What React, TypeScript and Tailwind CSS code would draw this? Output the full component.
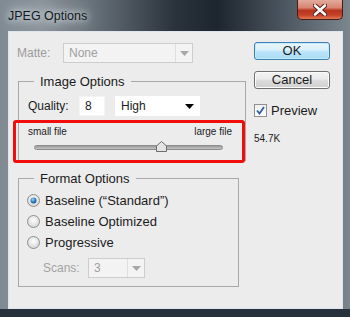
import React from "react";

function Arrow({ color = "#000" }: { color?: string }) {
  return (
    <svg width="9" height="5" viewBox="0 0 9 5">
      <path d="M0 0 H9 L4.5 5 Z" fill={color} />
    </svg>
  );
}

function Radio({ checked }: { checked?: boolean }) {
  return (
    <svg width="13" height="13" viewBox="0 0 13 13">
      <defs>
        <radialGradient id={checked ? "rg1" : "rg0"} cx="50%" cy="40%" r="60%">
          <stop offset="0%" stopColor="#ffffff" />
          <stop offset="100%" stopColor="#d4d4d4" />
        </radialGradient>
        <radialGradient id="dot" cx="40%" cy="35%" r="70%">
          <stop offset="0%" stopColor="#9fd3f5" />
          <stop offset="60%" stopColor="#2a7cc0" />
          <stop offset="100%" stopColor="#0e4f8a" />
        </radialGradient>
      </defs>
      <circle cx="6.5" cy="6.5" r="6" fill={`url(#${checked ? "rg1" : "rg0"})`} stroke="#8e8f8f" strokeWidth="1" />
      {checked && <circle cx="6.5" cy="6.5" r="3" fill="url(#dot)" />}
    </svg>
  );
}

export default function App() {
  return (
    <div
      className="w-[350px] h-[317px] flex flex-col overflow-hidden bg-[linear-gradient(to_right,#7f8a93_0%,#8b949b_12%,#5e6871_30%,#2a323b_50%,#1d252e_62%,#4e5862_82%,#7c868f_100%)] text-[12px] text-[#1b1b1b]"
      style={{ fontFamily: '"Liberation Sans", Arial, sans-serif' }}
    >
      {/* Title bar */}
      <div className="h-[31px] flex items-start justify-between">
        <div className="pl-[8px] pt-[9px] text-[12.5px] leading-[14px] text-[#101820] [text-shadow:0_0_6px_#e6eaee,0_0_12px_#d0d6dc,0_0_16px_#c0c8d0]">
          JPEG Options
        </div>
        <div className="mr-[7px] w-[46px] h-[20px] rounded-b-[5px] border border-[#4a1a14] border-t-0 bg-[linear-gradient(to_bottom,#e2aa9c_0%,#d88672_40%,#b8341d_55%,#c5432a_80%,#e07a55_100%)] flex items-center justify-center">
          <svg width="14" height="12" viewBox="0 0 14 12">
            <path d="M2 1.5 L12 10.5 M12 1.5 L2 10.5" stroke="#5a1d14" strokeWidth="4.5" strokeLinecap="round" />
            <path d="M2 1.5 L12 10.5 M12 1.5 L2 10.5" stroke="#ffffff" strokeWidth="2.6" strokeLinecap="round" />
          </svg>
        </div>
      </div>

      {/* Content panel */}
      <div className="ml-[8px] w-[335px] h-[278px] bg-[#ececec] border border-[#dfe5ea] flex">
        {/* Left column */}
        <div className="ml-[4px] w-[232px] flex flex-col">
          {/* Matte row */}
          <div className="mt-[11px] flex items-center h-[20px]">
            <div className="w-[50px] pl-[4px] text-[#9c9c9c]">Matte:</div>
            <div className="w-[130px] h-[20px] border border-[#cdcdcd] bg-[#f3f3f3] flex items-center">
              <div className="flex-1 pl-[5px] text-[#a0a0a0]">None</div>
              <div className="w-[17px] h-[18px] border-l border-[#dedede] flex items-center justify-center">
                <Arrow color="#a8a8a8" />
              </div>
            </div>
          </div>

          {/* Image Options */}
          <fieldset className="mt-[11px] ml-[5px] w-[221px] border border-[#a9a9a9] px-0">
            <legend className="ml-[15px] px-[6px] text-[13px] leading-[15px]">Image Options</legend>
            <div className="mt-[7px] flex items-center h-[20px]">
              <div className="w-[60px] pl-[9px]">Quality:</div>
              <div className="w-[26px] h-[20px] bg-white border border-[#f4f4f4] pl-[5px] leading-[18px]">8</div>
              <div className="ml-[10px] w-[85px] h-[20px] bg-white flex items-center justify-between pl-[6px] pr-[6px]">
                <span>High</span>
                <Arrow />
              </div>
            </div>
            <div className="relative mt-[4px] -ml-[6px] -mb-[3px] w-[232px] h-[43px] border-[3px] border-[#f20d0d] rounded-[3px]">
              <div className="mt-[3px] flex justify-between pl-[12px] pr-[10px] text-[10px] leading-[12px]">
                <span>small file</span>
                <span>large file</span>
              </div>
              <div className="relative mt-[7px] ml-[18px] w-[189px] h-[5px] rounded-full border border-[#8c8c8c] bg-[linear-gradient(to_bottom,#9b9b9b,#c4c4c4)]">
                <svg className="absolute left-[121px] -top-[5px]" width="11" height="11" viewBox="0 0 11 11">
                  <path d="M0.5 5 L5.5 0.5 L10.5 5 V10.5 H0.5 Z" fill="#e4e4e4" stroke="#6e6e6e" strokeWidth="1" />
                </svg>
              </div>
            </div>
          </fieldset>

          {/* Format Options */}
          <fieldset className="mt-[10px] ml-[5px] w-[221px] pb-[8px] border border-[#a9a9a9] px-0">
            <legend className="ml-[15px] px-[6px] text-[13px] leading-[15px]">Format Options</legend>
            <div className="mt-[8px] flex flex-col gap-[8px] pl-[8px]">
              <div className="flex items-center gap-[5px] h-[13px]">
                <Radio checked />
                <span className="text-[13px]">Baseline (“Standard”)</span>
              </div>
              <div className="flex items-center gap-[5px] h-[13px]">
                <Radio />
                <span className="text-[13px]">Baseline Optimized</span>
              </div>
              <div className="flex items-center gap-[5px] h-[13px]">
                <Radio />
                <span className="text-[13px]">Progressive</span>
              </div>
            </div>
            <div className="mt-[9px] flex items-center h-[20px] pl-[24px]">
              <div className="w-[45px] text-[#a3a3a3]">Scans:</div>
              <div className="w-[57px] h-[20px] border border-[#cdcdcd] bg-[#f3f3f3] flex items-center">
                <div className="flex-1 pl-[5px] text-[#a0a0a0]">3</div>
                <div className="w-[17px] h-[18px] border-l border-[#dedede] flex items-center justify-center">
                  <Arrow color="#a8a8a8" />
                </div>
              </div>
            </div>
          </fieldset>
        </div>

        {/* Right column */}
        <div className="ml-[9px] w-[77px] flex flex-col">
          <button className="mt-[10px] h-[18px] w-[76px] rounded-[3px] border border-[#3c7fb1] bg-[linear-gradient(to_bottom,#eaf6fd_0%,#d9f0fc_45%,#bee6fd_50%,#a7d9f5_100%)] shadow-[inset_0_0_0_1px_#c6e9fc] text-[13px] leading-[16px]">
            OK
          </button>
          <button className="mt-[11px] h-[18px] w-[76px] rounded-[3px] border border-[#707070] bg-[linear-gradient(to_bottom,#f2f2f2_0%,#ebebeb_45%,#dddddd_50%,#cfcfcf_100%)] shadow-[inset_0_0_0_1px_#fbfbfb] text-[13px] leading-[16px]">
            Cancel
          </button>
          <div className="mt-[15px] flex items-center gap-[4px] h-[13px]">
            <div className="w-[13px] h-[13px] border border-[#8f8f8f] bg-[linear-gradient(to_bottom,#f0f0f0,#ffffff)] flex items-center justify-center">
              <svg width="9" height="9" viewBox="0 0 9 9">
                <path d="M1 4.5 L3.5 7.5 L8 1" fill="none" stroke="#2f5fa8" strokeWidth="1.8" />
              </svg>
            </div>
            <span className="text-[13px]">Preview</span>
          </div>
          <div className="mt-[16px] text-[10px] leading-[12px]">54.7K</div>
        </div>
      </div>
      <div className="flex-1 bg-[#27313b]" />
    </div>
  );
}
